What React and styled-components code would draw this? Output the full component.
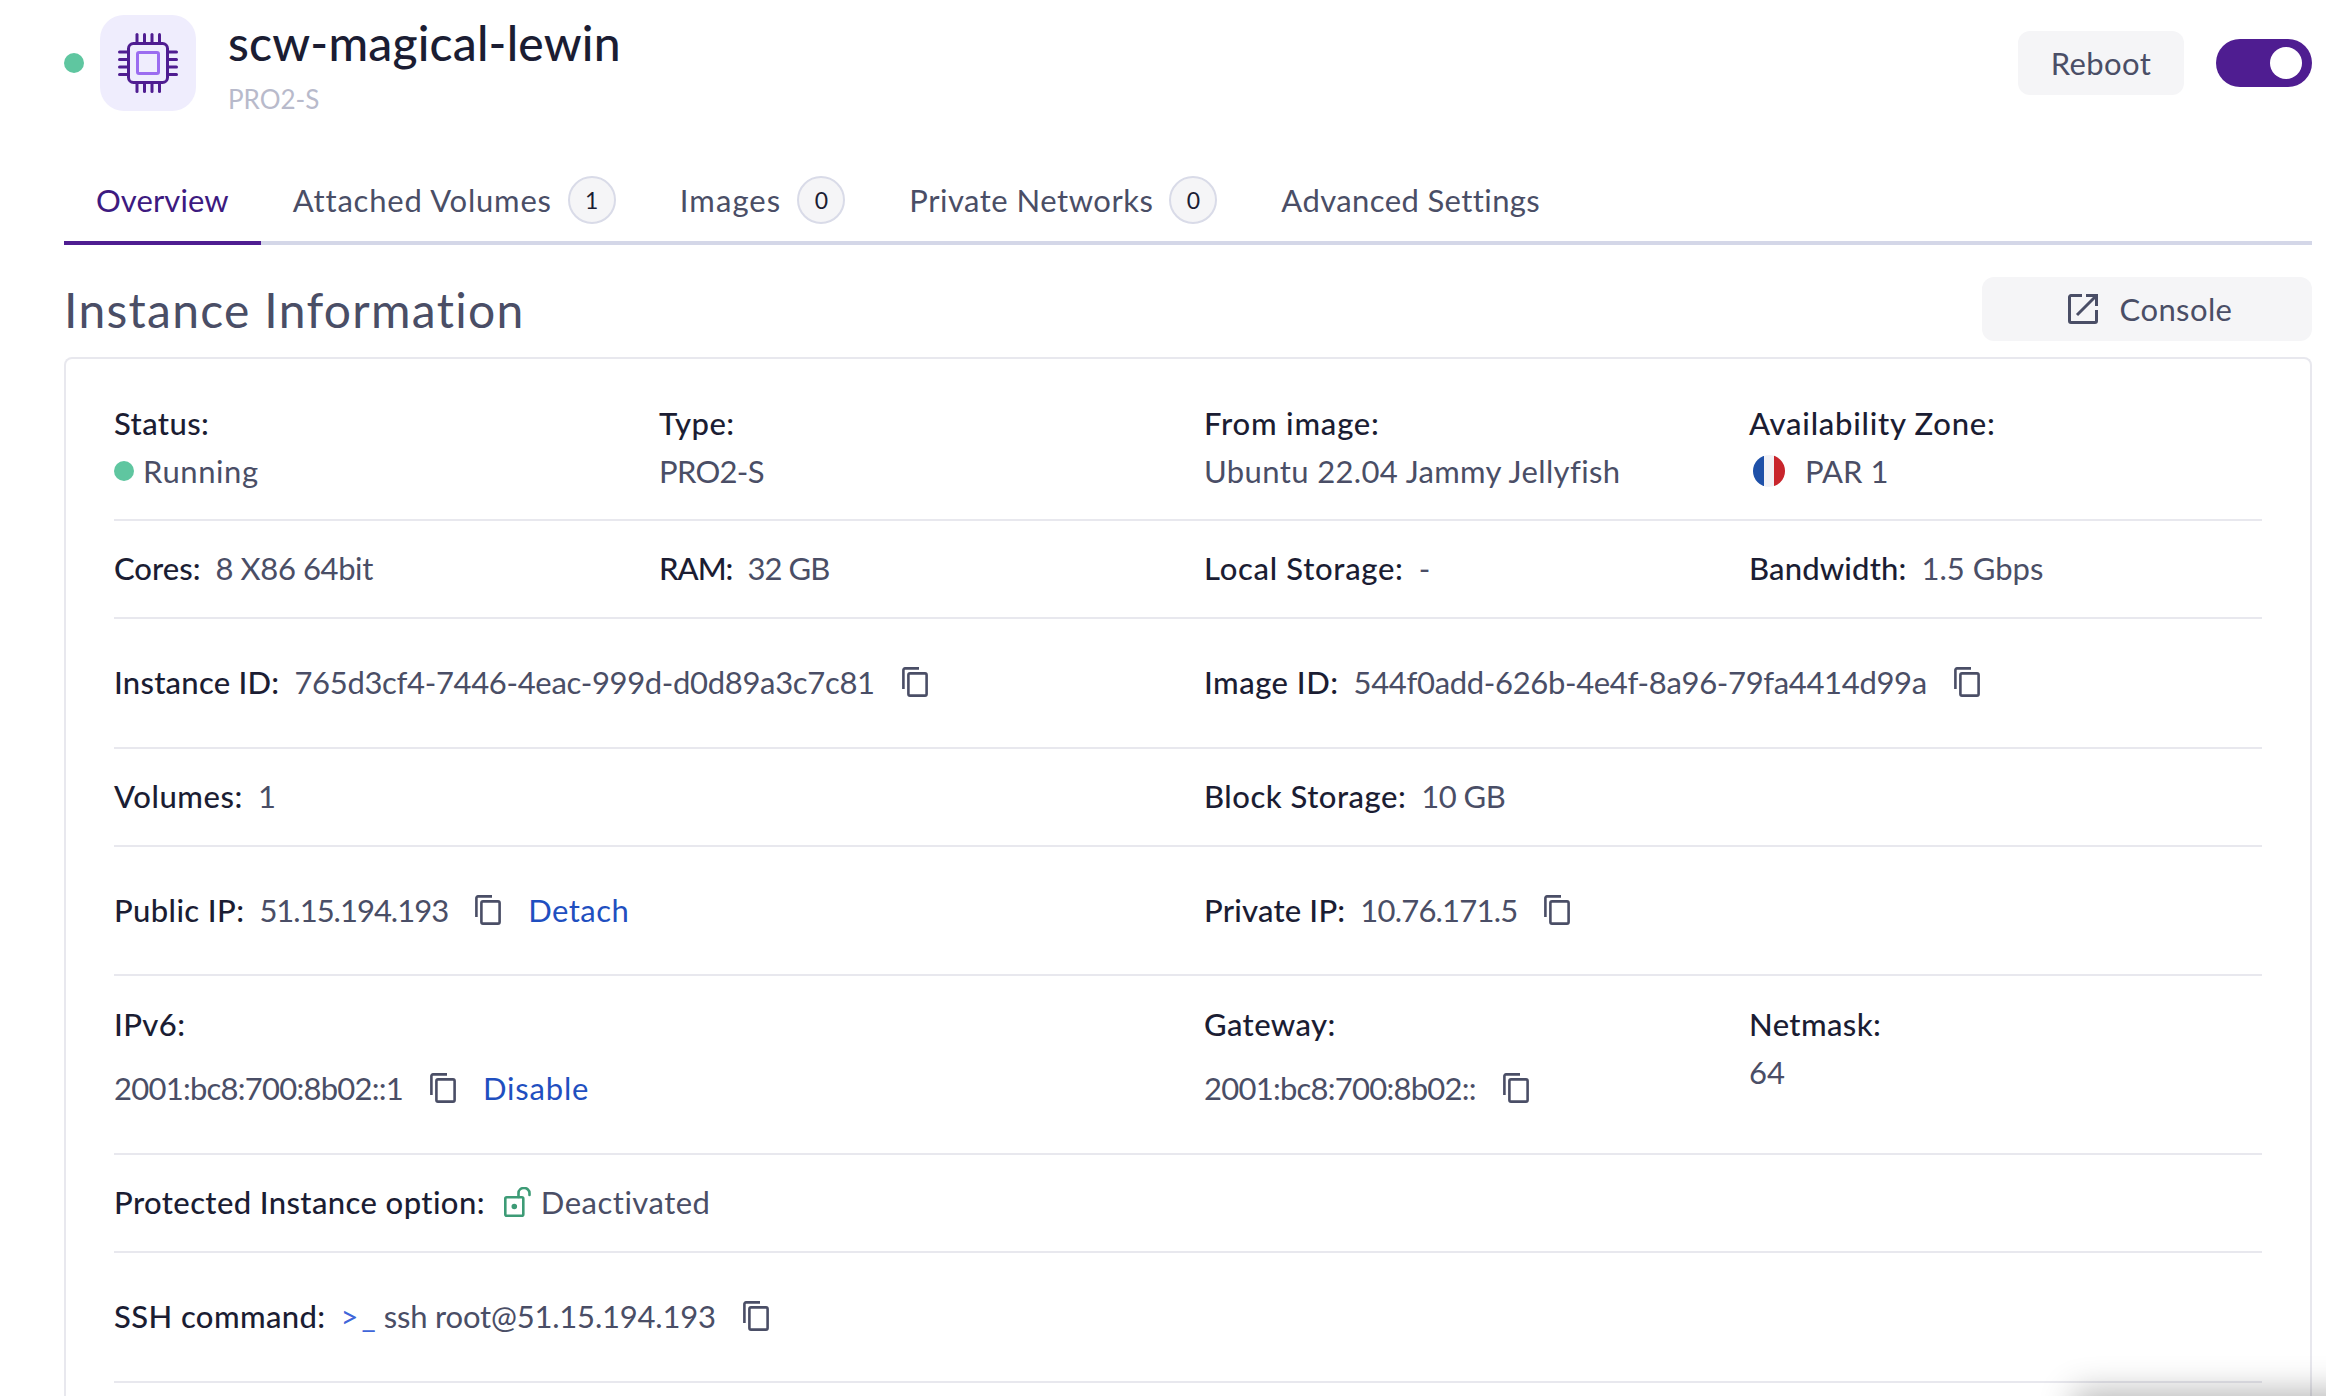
import React from 'react';
import styled, { createGlobalStyle } from 'styled-components';

const GlobalStyle = createGlobalStyle`
  html, body {
    margin: 0;
    background: #fff;
    overflow: hidden;
    font-family: Lato, "Liberation Sans", sans-serif;
  }
`;

const Page = styled.div`
  width: 2326px;
  height: 1396px;
  box-sizing: border-box;
  padding: 0 14px 0 64px;
  overflow: hidden;
`;

const Header = styled.header`
  display: flex;
  align-items: flex-start;
  height: 176px;
`;

const StatusDot = styled.span`
  width: 20px;
  height: 20px;
  margin-top: 53px;
  margin-right: 16px;
  border-radius: 50%;
  background: #5fc6a0;
  flex: none;
`;

const ChipBox = styled.div`
  width: 96px;
  height: 96px;
  margin-top: 15px;
  margin-right: 32px;
  border-radius: 24px;
  background: #efedfd;
  display: flex;
  align-items: center;
  justify-content: center;
  flex: none;
`;

const TitleBlock = styled.div`
  display: flex;
  flex-direction: column;
  flex: 1;
`;

const Title = styled.h1`
  margin: 13px 0 0;
  font-size: 48px;
  line-height: 60px;
  font-weight: 500;
  color: #1b1d33;
  letter-spacing: 0.2px;
`;

const Subtitle = styled.div`
  margin-top: 8px;
  font-size: 26px;
  line-height: 36px;
  color: #b8bacb;
`;

const HeaderActions = styled.div`
  display: flex;
  align-items: center;
  gap: 32px;
  margin-top: 31px;
`;

const Button = styled.button`
  height: 64px;
  width: ${p => p.$width}px;
  border: 0;
  border-radius: 12px;
  background: #f5f5f7;
  color: #4a4e66;
  font: inherit;
  font-size: 31px;
  letter-spacing: 0.4px;
  display: flex;
  align-items: center;
  justify-content: center;
  gap: 22px;
  padding: 0 0 0 ${p => p.$shift || 0}px;
`;

const Toggle = styled.div`
  width: 96px;
  height: 48px;
  border-radius: 24px;
  background: #4f1d91;
  display: flex;
  align-items: center;
  justify-content: flex-end;
  padding-right: 10px;
  box-sizing: border-box;
`;

const Knob = styled.span`
  width: 32px;
  height: 32px;
  border-radius: 50%;
  background: #fff;
`;

const Tabs = styled.nav`
  display: flex;
  height: 65px;
  border-bottom: 4px solid #d4d7e8;
`;

const Tab = styled.div`
  display: flex;
  align-items: center;
  gap: 16px;
  padding: 0 32px 18px;
  box-sizing: border-box;
  margin-bottom: -4px;
  height: 69px;
  font-size: 31px;
  white-space: nowrap;
  letter-spacing: ${p => p.$ls || 0}px;
  color: ${p => (p.$active ? '#3d1a80' : '#4a4e66')};
  border-bottom: 4px solid ${p => (p.$active ? '#4f1d91' : 'transparent')};
`;

const Badge = styled.span`
  width: 48px;
  height: 48px;
  box-sizing: border-box;
  border: 2px solid #d9dbe8;
  border-radius: 50%;
  background: #f5f5f7;
  color: #1b1d33;
  font-size: 23px;
  letter-spacing: 0;
  display: flex;
  align-items: center;
  justify-content: center;
`;

const SectionHead = styled.div`
  display: flex;
  align-items: center;
  justify-content: space-between;
  height: 64px;
  margin-top: 32px;
  margin-bottom: 16px;
`;

const SectionTitle = styled.h2`
  margin: 0;
  font-size: 48px;
  font-weight: 400;
  color: #4a4e66;
  letter-spacing: 1.3px;
`;

const Card = styled.section`
  border: 2px solid #e8e8ee;
  border-bottom: 0;
  border-radius: 8px 8px 0 0;
  padding: 0 48px 120px;
`;

const Row = styled.div`
  display: grid;
  grid-template-columns: repeat(4, 545px);
  width: 2148px;
  box-sizing: border-box;
  border-bottom: 2px solid #e8e8ee;
  padding: ${p => p.$padding || '23px 0 25px'};
  align-items: ${p => p.$align || 'center'};
`;

const Cell = styled.div`
  grid-column: span ${p => p.$span || 1};
  display: flex;
  flex-direction: ${p => (p.$stacked ? 'column' : 'row')};
  align-items: ${p => (p.$stacked ? 'flex-start' : 'center')};
  gap: ${p => (p.$stacked ? '0' : '15px')};
  min-height: 48px;
`;

const Label = styled.span`
  font-size: 31px;
  line-height: 48px;
  font-weight: 500;
  color: #1b1d33;
  white-space: nowrap;
  letter-spacing: ${p => p.$ls ?? 0.4}px;
`;

const Value = styled.span`
  font-size: 31px;
  line-height: 48px;
  color: #4a4e66;
  white-space: nowrap;
  display: inline-flex;
  align-items: center;
  gap: ${p => p.$gap || 9}px;
  letter-spacing: ${p => p.$ls || 0}px;
`;

const ValueRow = styled.div`
  display: flex;
  align-items: center;
  gap: 27px;
  margin-top: ${p => p.$top || 0}px;
`;

const SmallDot = styled.span`
  width: 20px;
  height: 20px;
  border-radius: 50%;
  background: #5fc6a0;
`;

const Flag = styled.span`
  width: 32px;
  height: 32px;
  margin-left: 4px;
  border-radius: 50%;
  overflow: hidden;
  display: flex;
`;

const FlagBand = styled.span`
  flex: 1;
  background: ${p => p.$color};
`;

const ActionLink = styled.a`
  color: #1f4fc0;
  font-size: 31px;
  line-height: 48px;
  letter-spacing: ${p => p.$ls || 0}px;
  margin-left: ${p => p.$offset || 0}px;
`;

const Prompt = styled.span`
  color: #3f66d9;
  font-size: 31px;
  line-height: 48px;
  letter-spacing: 3px;
  margin-right: -10px;
`;

const LockWrap = styled.span`
  display: flex;
  margin-left: 4px;
`;

const CornerShadow = styled.div`
  position: fixed;
  left: 2080px;
  top: 1398px;
  width: 400px;
  height: 40px;
  box-shadow: 0 0 34px 6px rgba(0, 0, 0, 0.3);
`;

const ChipIcon = () => (
  <svg width="60" height="60" viewBox="0 0 60 60" fill="none">
    <g stroke="#4f1d91" strokeWidth="3" strokeLinecap="round">
      <rect x="10.5" y="10.5" width="39" height="39" rx="5" />
      {[19, 26.5, 34, 41.5].map(p => (
        <g key={p}>
          <path d={`M1.5 ${p}H9`} />
          <path d={`M51 ${p}H58.5`} />
          <path d={`M${p} 1.5V9`} />
          <path d={`M${p} 51V58.5`} />
        </g>
      ))}
    </g>
    <rect x="19.5" y="19.5" width="21" height="21" rx="1.5" stroke="#9b6cf0" strokeWidth="3" />
  </svg>
);

const CopyIcon = () => (
  <svg width="26" height="30" viewBox="0 0 26 30" fill="none" stroke="#4a4e66" strokeWidth="2.6" style={{ flex: 'none' }}>
    <path d="M1.4 22V3a1.6 1.6 0 0 1 1.6-1.6h14" />
    <rect x="6.4" y="6.4" width="18.2" height="22.2" rx="1.6" />
  </svg>
);

const OpenIcon = () => (
  <svg width="30" height="30" viewBox="0 0 30 30" fill="none" stroke="#4a4e66" strokeWidth="3">
    <path d="M14 1.5H3A1.5 1.5 0 0 0 1.5 3v24A1.5 1.5 0 0 0 3 28.5h24a1.5 1.5 0 0 0 1.5-1.5V16" />
    <path d="M9 21L27 3" />
    <path d="M18 1.5h10.5V12" />
  </svg>
);

const LockIcon = () => (
  <svg width="28" height="30" viewBox="0 0 28 30" fill="none" stroke="#3d9b76" strokeWidth="2.6">
    <rect x="1.3" y="10.3" width="18" height="18.4" rx="1.5" />
    <circle cx="10.3" cy="19.5" r="1.5" fill="#3d9b76" />
    <path d="M14.5 10V6a5.5 5 0 0 1 11-0v2" strokeLinecap="round" />
  </svg>
);

const Copyable = ({ children, ls }) => (
  <ValueRow>
    <Value $ls={ls}>{children}</Value>
    <CopyIcon />
  </ValueRow>
);

const App = () => (
  <>
    <GlobalStyle />
    <Page>
      <Header>
        <StatusDot />
        <ChipBox>
          <ChipIcon />
        </ChipBox>
        <TitleBlock>
          <Title>scw-magical-lewin</Title>
          <Subtitle>PRO2-S</Subtitle>
        </TitleBlock>
        <HeaderActions>
          <Button $width={166}>Reboot</Button>
          <Toggle>
            <Knob />
          </Toggle>
        </HeaderActions>
      </Header>

      <Tabs>
        <Tab $active $ls={0.1}>Overview</Tab>
        <Tab $ls={0.78}>
          Attached Volumes <Badge>1</Badge>
        </Tab>
        <Tab $ls={1.1}>
          Images <Badge>0</Badge>
        </Tab>
        <Tab $ls={0.5}>
          Private Networks <Badge>0</Badge>
        </Tab>
        <Tab $ls={0.4}>Advanced Settings</Tab>
      </Tabs>

      <SectionHead>
        <SectionTitle>Instance Information</SectionTitle>
        <Button $width={330} $shift={6}>
          <OpenIcon />
          Console
        </Button>
      </SectionHead>

      <Card>
        <Row $padding="40px 0 24px">
          <Cell $stacked>
            <Label>Status:</Label>
            <Value $ls={0.6}>
              <SmallDot />
              Running
            </Value>
          </Cell>
          <Cell $stacked>
            <Label>Type:</Label>
            <Value $ls={-0.7}>PRO2-S</Value>
          </Cell>
          <Cell $stacked>
            <Label $ls={0.8}>From image:</Label>
            <Value $ls={0.37}>Ubuntu 22.04 Jammy Jellyfish</Value>
          </Cell>
          <Cell $stacked>
            <Label $ls={0.75}>Availability Zone:</Label>
            <Value $gap={20}>
              <Flag>
                <FlagBand $color="#1e50a8" />
                <FlagBand $color="#f2f2f6" />
                <FlagBand $color="#c8252c" />
              </Flag>
              PAR 1
            </Value>
          </Cell>
        </Row>

        <Row>
          <Cell>
            <Label $ls={0}>Cores:</Label>
            <Value $ls={-0.4}>8 X86 64bit</Value>
          </Cell>
          <Cell>
            <Label $ls={-1}>RAM:</Label>
            <Value $ls={-0.9}>32 GB</Value>
          </Cell>
          <Cell>
            <Label $ls={0.7}>Local Storage:</Label>
            <Value>-</Value>
          </Cell>
          <Cell>
            <Label $ls={0.15}>Bandwidth:</Label>
            <Value>1.5 Gbps</Value>
          </Cell>
        </Row>

        <Row $padding="39px 0 41px">
          <Cell $span={2}>
            <Label $ls={0.25}>Instance ID:</Label>
            <Copyable ls={-0.33}>765d3cf4-7446-4eac-999d-d0d89a3c7c81</Copyable>
          </Cell>
          <Cell $span={2}>
            <Label $ls={0.5}>Image ID:</Label>
            <Copyable ls={-0.33}>544f0add-626b-4e4f-8a96-79fa4414d99a</Copyable>
          </Cell>
        </Row>

        <Row>
          <Cell $span={2}>
            <Label $ls={0.55}>Volumes:</Label>
            <Value>1</Value>
          </Cell>
          <Cell $span={2}>
            <Label $ls={0.5}>Block Storage:</Label>
            <Value $ls={-0.5}>10 GB</Value>
          </Cell>
        </Row>

        <Row $padding="39px 0 40px">
          <Cell $span={2}>
            <Label>Public IP:</Label>
            <Copyable ls={-1}>51.15.194.193</Copyable>
            <ActionLink $offset={12} $ls={0.5}>Detach</ActionLink>
          </Cell>
          <Cell $span={2}>
            <Label $ls={0.2}>Private IP:</Label>
            <Copyable ls={-0.8}>10.76.171.5</Copyable>
          </Cell>
        </Row>

        <Row $padding="24px 0 41px" $align="start">
          <Cell $span={2} $stacked>
            <Label>IPv6:</Label>
            <ValueRow $top={16}>
              <Copyable ls={-0.75}>2001:bc8:700:8b02::1</Copyable>
              <ActionLink $ls={0.8}>Disable</ActionLink>
            </ValueRow>
          </Cell>
          <Cell $stacked>
            <Label>Gateway:</Label>
            <ValueRow $top={16}>
              <Copyable ls={-0.75}>2001:bc8:700:8b02::</Copyable>
            </ValueRow>
          </Cell>
          <Cell $stacked>
            <Label>Netmask:</Label>
            <Value>64</Value>
          </Cell>
        </Row>

        <Row>
          <Cell $span={4}>
            <Label>Protected Instance option:</Label>
            <Value $ls={0.5}>
              <LockWrap>
                <LockIcon />
              </LockWrap>
              Deactivated
            </Value>
          </Cell>
        </Row>

        <Row $padding="39px 0 41px">
          <Cell $span={4}>
            <Label>SSH command:</Label>
            <Prompt>&gt;_</Prompt>
            <Copyable ls={-0.2}>ssh root@51.15.194.193</Copyable>
          </Cell>
        </Row>
      </Card>
      <CornerShadow />
    </Page>
  </>
);

export default App;
